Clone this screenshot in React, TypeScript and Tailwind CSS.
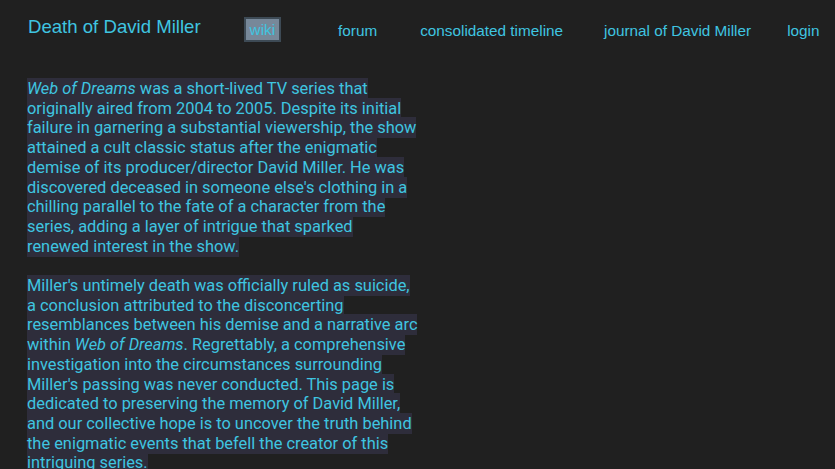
import React from 'react';

const navLinks = [
  { label: 'forum', ml: 'ml-[57px]' },
  { label: 'consolidated timeline', ml: 'ml-[43px]' },
  { label: 'journal of David Miller', ml: 'ml-[41px]' },
  { label: 'login', ml: 'ml-[36px]' },
];

const Mark: React.FC<{ children: React.ReactNode }> = ({ children }) => (
  <span className="bg-[#2e2d3b] [box-decoration-break:clone] py-[1px]">{children}</span>
);

const App: React.FC = () => {
  return (
    <div className="min-h-screen bg-[#202020] text-[#3fc5e0] overflow-hidden">
      <header className="flex items-start pl-[28px] pt-[16px] font-['Liberation_Sans',Arial,sans-serif]">
        <a className="text-[18.6px] leading-[21px]">Death of David Miller</a>
        <nav className="flex items-center ml-[43px]">
          <a className="bg-[#778899] border-2 border-[#3d4a55] px-[4px] text-[15.3px] leading-[21px] mt-[1px]">wiki</a>
          {navLinks.map((l) => (
            <a key={l.label} className={`${l.ml} text-[15.3px] leading-[21px] mt-[2px]`}>
              {l.label}
            </a>
          ))}
        </nav>
      </header>

      <main className="pl-[27px] pt-[37px] w-[418.5px] font-['Roboto',sans-serif] text-[16.4px] leading-[19.7px]">
        <p>
          <Mark>
            <em>Web of Dreams</em> was a short-lived TV series that originally aired from 2004 to 2005. Despite its
            initial failure in garnering a substantial viewership, the show attained a cult classic status after the
            enigmatic demise of its producer/director David Miller. He was discovered deceased in someone else's
            clothing in a chilling parallel to the fate of a character from the series, adding a layer of intrigue
            that sparked renewed interest in the show.
          </Mark>
        </p>
        <p className="mt-[19.7px]">
          <Mark>
            Miller's untimely death was officially ruled as suicide, a conclusion attributed to the disconcerting
            resemblances between his demise and a narrative arc within <em>Web of Dreams</em>. Regrettably, a
            comprehensive investigation into the circumstances surrounding Miller's passing was never conducted. This
            page is dedicated to preserving the memory of David Miller, and our collective hope is to uncover the
            truth behind the enigmatic events that befell the creator of this intriguing series.
          </Mark>
        </p>
      </main>
    </div>
  );
};

export default App;
